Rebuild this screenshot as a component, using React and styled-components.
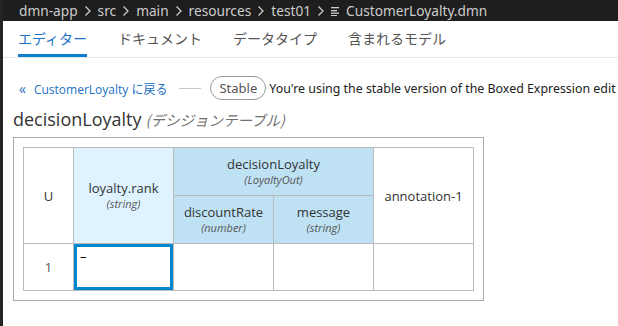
import styled, { createGlobalStyle } from "styled-components";

const GlobalStyle = createGlobalStyle`
  html, body {
    margin: 0;
    padding: 0;
    width: 618px;
    height: 326px;
    overflow: hidden;
    background: #ffffff;
  }
`;

const crumbs = ["dmn-app", "src", "main", "resources", "test01"];
const tabs = ["エディター", "ドキュメント", "データタイプ", "含まれるモデル"];

function Chevron() {
  return (
    <svg width="8" height="12" viewBox="0 0 8 12">
      <path d="M1.5 1.5 L6 6 L1.5 10.5" fill="none" stroke="#cccccc" strokeWidth="1.3" />
    </svg>
  );
}

function FileIcon() {
  return (
    <svg width="9" height="10" viewBox="0 0 9 10">
      <rect x="0" y="1" width="8" height="1.3" fill="#cccccc" />
      <rect x="0" y="4" width="6" height="1.3" fill="#cccccc" />
      <rect x="0" y="6.5" width="8" height="1.3" fill="#cccccc" />
      <rect x="0" y="9" width="6" height="1" fill="#cccccc" />
    </svg>
  );
}

export default function App() {
  return (
    <Page>
      <GlobalStyle />
      <Strip />
      <Main>
        <TopBar>
          {crumbs.map((c) => (
            <Crumb key={c}>
              {c}
              <Chevron />
            </Crumb>
          ))}
          <Crumb>
            <FileIcon />
            CustomerLoyalty.dmn
          </Crumb>
        </TopBar>
        <Tabs>
          {tabs.map((t, i) => (
            <Tab key={t} active={i === 0}>
              {t}
            </Tab>
          ))}
        </Tabs>
        <Body>
          <BackRow>
            <BackLink>
              <Arrows>«</Arrows>CustomerLoyalty に戻る
            </BackLink>
            <Rule />
            <Pill>Stable</Pill>
            <Notice>You're using the stable version of the Boxed Expression edit</Notice>
          </BackRow>
          <Title>
            decisionLoyalty<Kind>(デシジョンテーブル)</Kind>
          </Title>
          <Frame>
            <Table>
              <colgroup>
                <col style={{ width: 50 }} />
                <col style={{ width: 100 }} />
                <col style={{ width: 100 }} />
                <col style={{ width: 100 }} />
                <col style={{ width: 100 }} />
              </colgroup>
              <tbody>
                <tr>
                  <Head rowSpan={2}>U</Head>
                  <Head rowSpan={2} tone="input">
                    <Name>loyalty.rank</Name>
                    <Type>(string)</Type>
                  </Head>
                  <Head colSpan={2} tone="output">
                    <Name>decisionLoyalty</Name>
                    <Type>(LoyaltyOut)</Type>
                  </Head>
                  <Head rowSpan={2}>annotation-1</Head>
                </tr>
                <tr>
                  <Head tone="output">
                    <Name>discountRate</Name>
                    <Type>(number)</Type>
                  </Head>
                  <Head tone="output">
                    <Name>message</Name>
                    <Type>(string)</Type>
                  </Head>
                </tr>
                <tr>
                  <Cell center>1</Cell>
                  <Cell selected>–</Cell>
                  <Cell />
                  <Cell />
                  <Cell />
                </tr>
              </tbody>
            </Table>
          </Frame>
        </Body>
      </Main>
    </Page>
  );
}

const Page = styled.div`
  display: flex;
  width: 618px;
  height: 326px;
  overflow: hidden;
`;

const Strip = styled.div`
  flex: 0 0 3px;
  background: #252526;
`;

const Main = styled.div`
  flex: 1;
  display: flex;
  flex-direction: column;
  min-width: 0;
`;

const TopBar = styled.div`
  height: 21px;
  background: #1e1e1e;
  display: flex;
  align-items: center;
  gap: 6px;
  padding-left: 16px;
  white-space: nowrap;
`;

const Crumb = styled.span`
  display: inline-flex;
  align-items: center;
  gap: 6px;
  font-family: "Noto Sans", "Open Sans", sans-serif;
  font-size: 13.7px;
  color: #cccccc;
  line-height: 21px;
`;

const Tabs = styled.div`
  height: 36px;
  display: flex;
  gap: 31px;
  padding-left: 15px;
  border-bottom: 1px solid #e6e6e6;
`;

const Tab = styled.div`
  display: flex;
  align-items: center;
  padding-top: 1px;
  font-family: "Noto Sans CJK JP", "Noto Sans", sans-serif;
  font-size: 14px;
  color: ${(p) => (p.active ? "#1a73c8" : "#555555")};
  border-bottom: 3px solid ${(p) => (p.active ? "#0e7fd0" : "transparent")};
  box-sizing: border-box;
`;

const Body = styled.div`
  padding-left: 10px;
`;

const BackRow = styled.div`
  display: flex;
  align-items: center;
  height: 24px;
  margin-top: 18px;
  padding-left: 6px;
  white-space: nowrap;
`;

const BackLink = styled.span`
  flex-shrink: 0;
  font-family: "Open Sans", "Noto Sans CJK JP", sans-serif;
  font-size: 12px;
  color: #1a6fc4;
`;

const Arrows = styled.span`
  font-size: 14px;
  margin-right: 8px;
  color: #1a6fc4;
`;

const Rule = styled.span`
  flex-shrink: 0;
  width: 22px;
  height: 1px;
  background: #c8c8c8;
  margin: 0 9px 0 12px;
`;

const Pill = styled.span`
  flex-shrink: 0;
  box-sizing: border-box;
  height: 24px;
  padding: 0 8px;
  border: 1px solid #9a9a9a;
  border-radius: 12px;
  display: inline-flex;
  align-items: center;
  font-family: "Noto Sans", sans-serif;
  font-size: 13px;
  color: #555555;
`;

const Notice = styled.span`
  flex-shrink: 0;
  margin-left: 3px;
  font-family: "Noto Sans", sans-serif;
  font-size: 12.4px;
  color: #222222;
`;

const Title = styled.div`
  margin-top: 7px;
  height: 30px;
  display: flex;
  align-items: baseline;
  font-family: "Open Sans", sans-serif;
  font-size: 18px;
  color: #333333;
`;

const Kind = styled.span`
  margin-left: 4px;
  font-family: "Noto Sans CJK JP", sans-serif;
  font-size: 14.5px;
  font-style: italic;
  color: #707070;
`;

const Frame = styled.div`
  width: 451px;
  padding: 9px;
  border: 1px solid #aaaaaa;
`;

const Table = styled.table`
  border-collapse: collapse;
  table-layout: fixed;
  width: 451px;
  font-family: "Open Sans", sans-serif;
  color: #333333;
`;

const Head = styled.td`
  height: 47px;
  padding: 0;
  text-align: center;
  vertical-align: middle;
  border: 1px solid #bbbbbb;
  font-size: 13px;
  background: ${(p) =>
    p.tone === "input" ? "#def3ff" : p.tone === "output" ? "#bee1f4" : "#ffffff"};
`;

const Name = styled.div`
  font-size: 13px;
  line-height: 17px;
`;

const Type = styled.div`
  font-size: 11px;
  font-style: italic;
  line-height: 14px;
  color: #555555;
`;

const Cell = styled.td`
  height: 47px;
  padding: 0;
  border: 1px solid #bbbbbb;
  font-size: 13px;
  color: ${(p) => (p.selected ? "#000000" : "#555555")};
  text-align: ${(p) => (p.center ? "center" : "left")};
  vertical-align: ${(p) => (p.selected ? "top" : "middle")};
  box-shadow: ${(p) => (p.selected ? "inset 0 0 0 3px #0088ce" : "none")};
  padding-left: ${(p) => (p.selected ? "6px" : "0")};
  padding-top: ${(p) => (p.selected ? "3px" : "0")};
  box-sizing: border-box;
`;
